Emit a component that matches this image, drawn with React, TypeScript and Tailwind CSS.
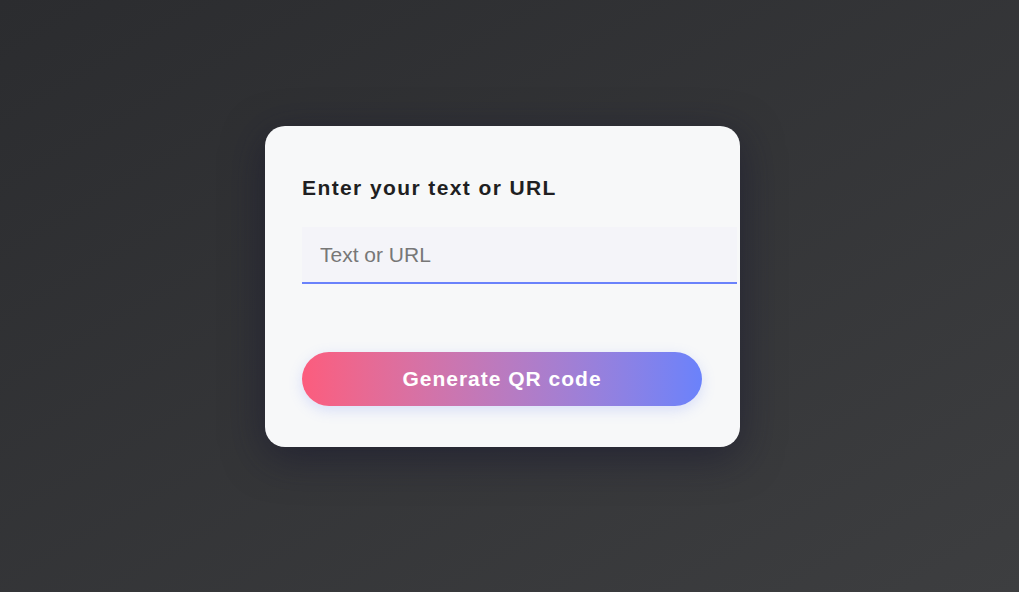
import React from "react";

export default function App() {
  return (
    <div className="flex h-[592px] w-full items-center justify-center bg-gradient-to-br from-[#2b2c2f] to-[#3d3e40] pb-[19px] pr-[14px] font-['Liberation_Sans',Arial,sans-serif]">
      <div className="box-border flex h-[321px] w-[475px] flex-col rounded-[20px] bg-[#f7f8f9] pl-[37px] pt-[50px] shadow-[0_10px_40px_rgba(20,20,45,0.55)]">
        <h2 className="m-0 text-[21px] font-bold leading-[24px] tracking-[1.4px] text-[#1f1f22]">
          Enter your text or URL
        </h2>
        <input
          type="text"
          placeholder="Text or URL"
          className="mt-[27px] box-border h-[57px] w-[435px] border-0 border-b-2 border-solid border-[#6a82fb] bg-[#f4f4f9] px-[18px] font-['Liberation_Sans',Arial,sans-serif] text-[21px] text-[#333] outline-none placeholder:text-[#777]"
        />
        <button className="mt-[68px] h-[54px] w-[400px] cursor-pointer rounded-full border-0 bg-gradient-to-r from-[#fc5c7d] to-[#6a82fb] font-['Liberation_Sans',Arial,sans-serif] text-[21px] font-bold tracking-[1px] text-white shadow-[0_4px_14px_rgba(106,130,251,0.22)]">
          Generate QR code
        </button>
      </div>
    </div>
  );
}
